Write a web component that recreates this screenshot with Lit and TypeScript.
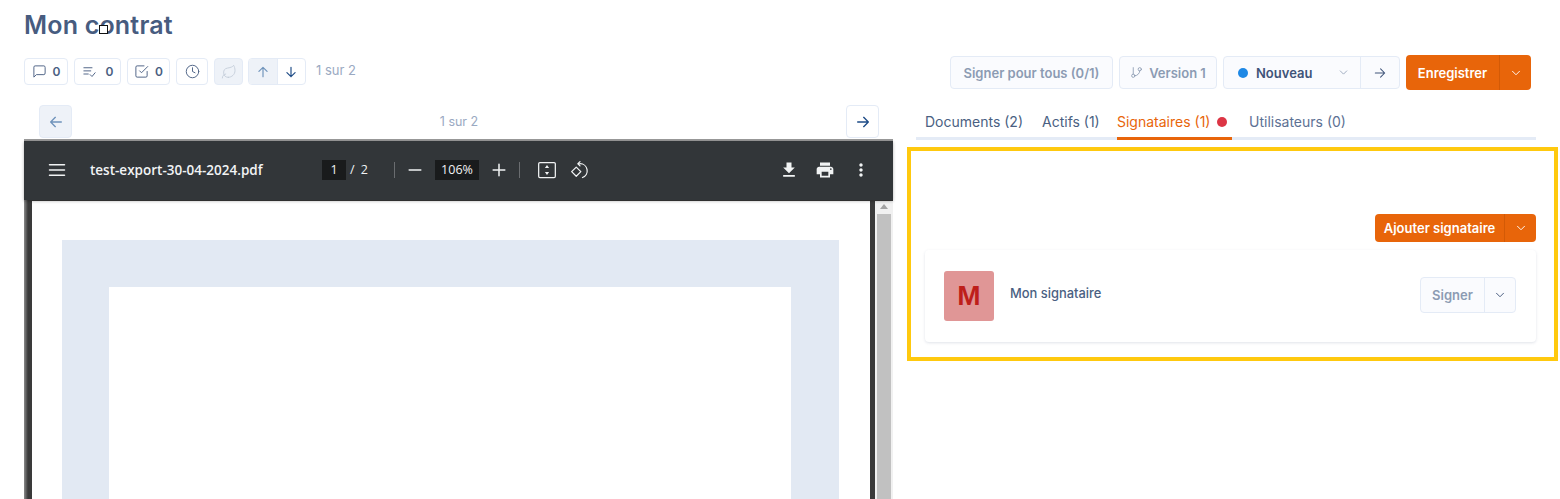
import { LitElement, html, css, svg } from "lit";
import { customElement } from "lit/decorators.js";

const icon = (body: unknown, size = 16, sw = 1.5) => html`<svg
  width=${size}
  height=${size}
  viewBox="0 0 24 24"
  fill="none"
  stroke="currentColor"
  stroke-width=${sw}
  stroke-linecap="round"
  stroke-linejoin="round"
>${body}</svg>`;

const solid = (d: string, size = 24) => html`<svg width=${size} height=${size} viewBox="0 0 24 24" fill="currentColor"><path d=${d}></path></svg>`;

const chevron = svg`<path d="M6 9l6 6 6-6"></path>`;
const arrowLeft = svg`<path d="M20 12H4M11 5l-7 7 7 7"></path>`;
const arrowRight = svg`<path d="M4 12h16M13 5l7 7-7 7"></path>`;
const arrowUp = svg`<path d="M12 20V4M5 11l7-7 7 7"></path>`;
const arrowDown = svg`<path d="M12 4v16M5 13l7 7 7-7"></path>`;

@customElement("app-root")
export class AppRoot extends LitElement {
  static styles = css`
    :host {
      display: block;
      width: 1560px;
      height: 499px;
      overflow: hidden;
      background: #fff;
      color: #4a5f82;
      font-family: Inter, "Noto Sans", sans-serif;
    }
    * {
      box-sizing: border-box;
    }
    .title-row {
      position: relative;
      height: 55px;
      padding: 10px 0 0 24px;
    }
    h1 {
      margin: 0;
      font-size: 25px;
      line-height: 30px;
      font-weight: 600;
      color: #475c7f;
      letter-spacing: 0.2px;
    }
    .cursor {
      position: absolute;
      left: 99px;
      top: 25px;
      width: 9px;
      height: 9px;
      background: #fff;
      border: 1.5px solid #111;
    }
    .columns {
      display: grid;
      grid-template-columns: 869px 651px;
      column-gap: 14px;
      padding-left: 24px;
    }
    .btn {
      display: flex;
      align-items: center;
      justify-content: center;
      background: #fff;
      border: 1px solid #e4ebf6;
      border-radius: 4px;
      font-size: 13px;
      font-weight: 600;
      color: #4a5f82;
    }
    .tools {
      display: flex;
      align-items: center;
      height: 27px;
      margin-top: 3px;
    }
    .tools .btn {
      height: 27px;
      gap: 6px;
      margin-right: 6px;
      font-size: 12px;
    }
    .tools .b1 { width: 44px; }
    .tools .b2 { width: 47px; gap: 9px; }
    .tools .b3 { width: 43px; }
    .tools .b4 { width: 32px; }
    .tools .b5 {
      width: 29px;
      margin-right: 5px;
      background: #eef2f8;
      color: #c3ccd9;
    }
    .updown {
      display: flex;
      width: 58px;
      height: 27px;
      border: 1px solid #e4ebf6;
      border-radius: 4px;
      overflow: hidden;
    }
    .updown span {
      flex: 1;
      display: flex;
      align-items: center;
      justify-content: center;
      color: #1d4b86;
    }
    .updown span:first-child {
      background: #eef2f8;
      color: #6f93bb;
      border-right: 1px solid #e4ebf6;
    }
    .count {
      margin-left: 10px;
      padding-bottom: 3px;
      font-size: 13px;
      color: #9aa9c2;
    }
    .pager {
      display: flex;
      align-items: center;
      justify-content: space-between;
      height: 33px;
      margin-top: 20px;
      padding: 0 14px 0 15px;
      font-size: 12.5px;
      color: #9aa9c2;
    }
    .pager .btn {
      width: 33px;
      height: 33px;
      color: #1d4b86;
    }
    .pager .btn.off {
      background: #eef2f8;
      color: #6f93bb;
    }
    .viewer {
      margin-top: 1px;
      border-top: 2px solid #9a9a9a;
      background: #3b3d3f;
    }
    .pdfbar {
      display: flex;
      align-items: center;
      height: 59px;
      padding-bottom: 2px;
      background: #323639;
      color: #f1f3f4;
      font-family: "Open Sans", "Noto Sans", sans-serif;
      box-shadow: 0 1px 3px rgba(0, 0, 0, 0.3);
      position: relative;
    }
    .menu {
      display: flex;
      margin-left: 24px;
      width: 42px;
    }
    .file {
      width: 232px;
      font-size: 13.5px;
      font-weight: 600;
    }
    .pageinput {
      display: flex;
      align-items: center;
      justify-content: center;
      width: 24px;
      height: 20px;
      background: #191b1c;
      font-size: 12.5px;
    }
    .of {
      width: 48px;
      padding-left: 4px;
      font-size: 12.5px;
      word-spacing: 3px;
    }
    .sep {
      width: 1px;
      height: 16px;
      background: #6a6d70;
    }
    .zoom {
      display: flex;
      align-items: center;
      justify-content: center;
      width: 44px;
      height: 20px;
      background: #191b1c;
      font-size: 12.5px;
    }
    .ic {
      display: flex;
      align-items: center;
      justify-content: center;
      width: 20px;
    }
    .minus { margin: 0 10px 0 10px; }
    .plus { margin: 0 10px; }
    .fit { margin: 0 13px 0 17px; }
    .end {
      display: flex;
      align-items: center;
      gap: 16px;
      margin-left: auto;
      padding-right: 22px;
    }
    .pdfbody {
      display: flex;
      height: 300px;
      padding-left: 8px;
      padding-top: 1px;
      background: linear-gradient(90deg, #8a8a8a 0, #3a3a3a 4px);
    }
    .sheet {
      width: 838px;
      padding: 39px 31px 0 30px;
      background: #fff;
    }
    .band {
      height: 300px;
      padding: 47px 48px 0 47px;
      background: #e2e9f3;
    }
    .band div {
      height: 300px;
      background: #fff;
    }
    .scroll {
      display: flex;
      flex-direction: column;
      align-items: center;
      width: 18px;
      margin-left: 5px;
      background: #f1f1f1;
      padding-top: 3px;
    }
    .scroll i {
      width: 0;
      height: 0;
      border: 4px solid transparent;
      border-top: 0;
      border-bottom: 5px solid #a3a3a3;
    }
    .scroll b {
      width: 14px;
      height: 300px;
      margin-top: 5px;
      background: #c1c1c1;
    }
    .actions {
      display: flex;
      justify-content: flex-end;
      align-items: center;
      gap: 6px;
      height: 35px;
      padding-right: 27px;
    }
    .actions .ghost {
      height: 33px;
      background: #fafbfe;
      color: #8c9bb3;
    }
    .sign-all { width: 163px; }
    .version { width: 98px; gap: 6px; }
    .status {
      display: flex;
      width: 177px;
      height: 33px;
      border: 1px solid #e4ebf6;
      border-radius: 4px;
      background: #fafbfe;
      font-size: 13px;
      font-weight: 600;
    }
    .status .state {
      flex: 1;
      display: flex;
      align-items: center;
      padding-left: 14px;
      border-right: 1px solid #e4ebf6;
      color: #3f5479;
    }
    .status .dot {
      width: 10px;
      height: 10px;
      margin-right: 8px;
      border-radius: 50%;
      background: #1e88e5;
    }
    .status .state svg {
      margin-left: auto;
      margin-right: 10px;
      color: #8c9bb3;
    }
    .status .next {
      display: flex;
      align-items: center;
      justify-content: center;
      width: 38px;
      color: #3f5479;
    }
    .split {
      display: flex;
      align-items: stretch;
      border-radius: 4px;
      background: #e8650a;
      color: #fff;
      font-size: 13px;
      font-weight: 600;
    }
    .split .main {
      display: flex;
      align-items: center;
      justify-content: center;
      border-right: 1px solid #d35a06;
    }
    .split .more {
      display: flex;
      align-items: center;
      justify-content: center;
      flex: 1;
    }
    .save { width: 125px; height: 35px; }
    .save .main { width: 94px; }
    .tabs {
      display: flex;
      align-items: flex-end;
      height: 50px;
      margin: 0 22px 0 9px;
      border-bottom: 3px solid #e4ebf6;
      font-size: 14px;
    }
    .tab {
      display: flex;
      align-items: center;
      gap: 7px;
      height: 31px;
      margin-bottom: -3px;
      padding: 0 0 3px;
      border-bottom: 3px solid transparent;
      white-space: nowrap;
    }
    .tab.t1 { margin-left: 9px; width: 117px; }
    .tab.t2 { width: 75px; }
    .tab.t3 {
      width: 115px;
      color: #e8650a;
      border-bottom-color: #e8650a;
    }
    .tab.t4 { margin-left: 17px; color: #5d7194; }
    .tab .alert {
      width: 10px;
      height: 10px;
      border-radius: 50%;
      background: #dc3545;
    }
    .panel {
      height: 214px;
      margin-top: 7px;
      border: 4px solid #ffc90e;
      padding: 63px 18px 0 14px;
    }
    .add-row {
      display: flex;
      justify-content: flex-end;
    }
    .add { width: 161px; height: 28px; }
    .add .main { width: 130px; }
    .card {
      display: flex;
      align-items: center;
      height: 92px;
      margin-top: 8px;
      padding: 0 20px 0 19px;
      border-radius: 4px;
      box-shadow: 0 1px 3px rgba(60, 80, 120, 0.16);
    }
    .avatar {
      display: flex;
      align-items: center;
      justify-content: center;
      width: 50px;
      height: 50px;
      border-radius: 3px;
      background: #e09696;
      color: #be1e1a;
      font-family: "Liberation Sans", sans-serif;
      font-size: 28px;
      font-weight: 700;
    }
    .name {
      margin: 0 auto 0 16px;
      padding-bottom: 6px;
      font-size: 12.9px;
      font-weight: 500;
    }
    .sign {
      display: flex;
      width: 96px;
      height: 36px;
      margin-bottom: 2px;
      border: 1px solid #e4ebf6;
      border-radius: 4px;
      background: #fafbfe;
      color: #8c9bb3;
      font-size: 13px;
      font-weight: 600;
    }
    .sign span {
      display: flex;
      align-items: center;
      justify-content: center;
      width: 64px;
      border-right: 1px solid #e4ebf6;
    }
    .sign em {
      display: flex;
      align-items: center;
      justify-content: center;
      flex: 1;
      color: #3f5479;
    }
  `;

  render() {
    return html`
      <div class="title-row">
        <h1>Mon contrat</h1>
        <div class="cursor"></div>
      </div>
      <div class="columns">
        <section>
          <div class="tools">
            <div class="btn b1">
              ${icon(svg`<path d="M21 15a2 2 0 0 1-2 2H7l-4 4V5a2 2 0 0 1 2-2h14a2 2 0 0 1 2 2z"></path>`, 15)}0
            </div>
            <div class="btn b2">
              ${icon(svg`<path d="M3 6h13M3 11h11M3 16h7M13 17l3 3 5-6"></path>`, 15)}0
            </div>
            <div class="btn b3">
              ${icon(svg`<path d="M9 11l3 3L22 4"></path><path d="M21 12v7a2 2 0 0 1-2 2H5a2 2 0 0 1-2-2V5a2 2 0 0 1 2-2h11"></path>`, 15)}0
            </div>
            <div class="btn b4">
              ${icon(svg`<circle cx="12" cy="12" r="10"></circle><path d="M12 6v6l4 2"></path>`, 15)}
            </div>
            <div class="btn b5">
              ${icon(svg`<path d="M11 20A7 7 0 0 1 9.8 6.1C15.5 5 17 4.48 19 2c1 2 2 4.18 2 8 0 5.5-4.78 10-10 10z"></path><path d="M2 21c0-3 1.85-5.36 5.08-6"></path>`, 16, 1.3)}
            </div>
            <div class="updown">
              <span>${icon(arrowUp, 14, 2)}</span>
              <span>${icon(arrowDown, 14, 2)}</span>
            </div>
            <div class="count">1 sur 2</div>
          </div>
          <div class="pager">
            <div class="btn off">${icon(arrowLeft, 16, 2)}</div>
            <div>1 sur 2</div>
            <div class="btn">${icon(arrowRight, 16, 2)}</div>
          </div>
          <div class="viewer">
            <div class="pdfbar">
              <div class="menu">
                ${icon(svg`<path d="M2 5h20M2 12h20M2 19h20"></path>`, 18, 2)}
              </div>
              <div class="file">test-export-30-04-2024.pdf</div>
              <div class="pageinput">1</div>
              <div class="of">/ 2</div>
              <div class="sep"></div>
              <div class="ic minus">${icon(svg`<path d="M2 12h20"></path>`, 14, 2.6)}</div>
              <div class="zoom">106%</div>
              <div class="ic plus">${icon(svg`<path d="M2 12h20M12 2v20"></path>`, 14, 2.6)}</div>
              <div class="sep"></div>
              <div class="ic fit">
                ${icon(svg`<rect x="2" y="3" width="20" height="18" rx="1.5"></rect><path d="M12 6l-2.5 3.5h5zM12 18l-2.5-3.5h5z" fill="currentColor" stroke="none"></path>`, 20, 1.5)}
              </div>
              <div class="ic">
                ${icon(svg`<path d="M2 14l5.5-5.5L13 14l-5.5 5.5z"></path><path d="M12 2L9.5 4.500 12 7"></path><path d="M10 4.500h2a8.500 8.500 0 0 1 3 16.500"></path>`, 20, 1.5)}
              </div>
              <div class="end">
                ${solid("M19 9h-4V3H9v6H5l7 7 7-7zM5 18v2h14v-2H5z", 20)}
                ${solid("M19 8H5c-1.66 0-3 1.34-3 3v6h4v4h12v-4h4v-6c0-1.66-1.34-3-3-3zm-3 11H8v-5h8v5zm3-7c-.55 0-1-.45-1-1s.45-1 1-1 1 .45 1 1-.45 1-1 1zm-1-9H6v4h12V3z", 20)}
                ${solid("M12 8c1.1 0 2-.9 2-2s-.9-2-2-2-2 .9-2 2 .9 2 2 2zm0 2c-1.1 0-2 .9-2 2s.9 2 2 2 2-.9 2-2-.9-2-2-2zm0 6c-1.1 0-2 .9-2 2s.9 2 2 2 2-.9 2-2-.9-2-2-2z", 20)}
              </div>
            </div>
            <div class="pdfbody">
              <div class="sheet">
                <div class="band"><div></div></div>
              </div>
              <div class="scroll"><i></i><b></b></div>
            </div>
          </div>
        </section>
        <section>
          <div class="actions">
            <div class="btn ghost sign-all">Signer pour tous (0/1)</div>
            <div class="btn ghost version">
              ${icon(svg`<path d="M6 3v12"></path><circle cx="18" cy="6" r="3"></circle><circle cx="6" cy="18" r="3"></circle><path d="M18 9a9 9 0 0 1-9 9"></path>`, 13, 1.6)}
              Version 1
            </div>
            <div class="status">
              <div class="state">
                <span class="dot"></span>Nouveau
                ${icon(chevron, 13, 1.5)}
              </div>
              <div class="next">${icon(arrowRight, 14, 1.8)}</div>
            </div>
            <div class="split save">
              <div class="main">Enregistrer</div>
              <div class="more">${icon(chevron, 14, 1.6)}</div>
            </div>
          </div>
          <nav class="tabs">
            <div class="tab t1">Documents (2)</div>
            <div class="tab t2">Actifs (1)</div>
            <div class="tab t3">Signataires (1) <span class="alert"></span></div>
            <div class="tab t4">Utilisateurs (0)</div>
          </nav>
          <div class="panel">
            <div class="add-row">
              <div class="split add">
                <div class="main">Ajouter signataire</div>
                <div class="more">${icon(chevron, 14, 1.6)}</div>
              </div>
            </div>
            <div class="card">
              <div class="avatar">M</div>
              <div class="name">Mon signataire</div>
              <div class="sign">
                <span>Signer</span>
                <em>${icon(chevron, 14, 1.6)}</em>
              </div>
            </div>
          </div>
        </section>
      </div>
    `;
  }
}
